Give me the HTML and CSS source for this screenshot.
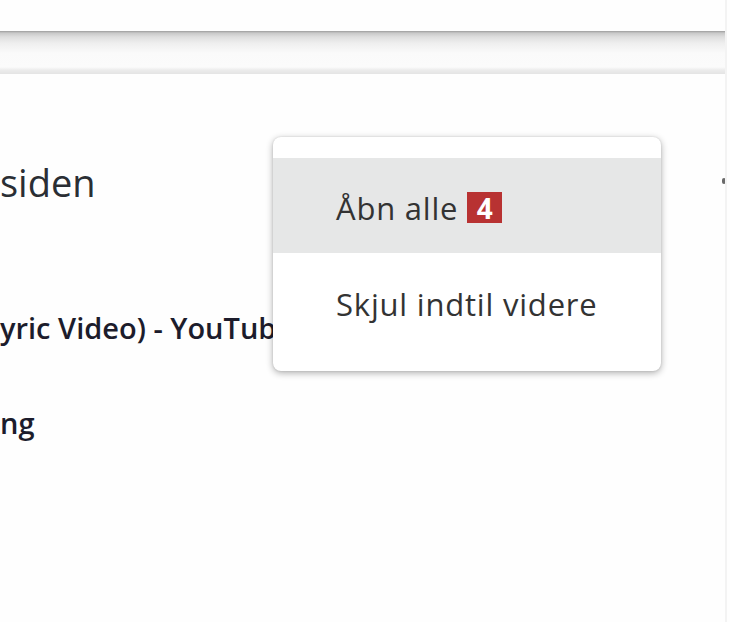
FILE: index.html
```html
<!DOCTYPE html>
<html lang="da">
<head>
<meta charset="utf-8">
<title>Menu</title>
<link rel="stylesheet" href="styles.css">
</head>
<body>
<div class="page">
  <div class="topbar"></div>
  <div class="content">
    <h2 class="heading">siden</h2>
    <ul class="list">
      <li class="item">yric Video) - YouTube</li>
      <li class="item">ng</li>
    </ul>
  </div>
  <div class="edge-mark"></div>
  <div class="menu">
    <div class="menu-item active">Åbn alle <span class="badge">4</span></div>
    <div class="menu-item second">Skjul indtil videre</div>
  </div>
</div>
</body>
</html>
```

FILE: styles.css
```css
html, body {
  margin: 0;
  padding: 0;
  background: #fefefe;
}
.page {
  position: relative;
  width: 727px;
  height: 622px;
  border-right: 2px solid #f3f3f3;
  overflow: hidden;
  font-family: "Open Sans", "Noto Sans", sans-serif;
  padding-top: 31px;
  box-sizing: border-box;
}
.topbar {
  height: 43px;
  background: linear-gradient(to bottom, #9c9c9c 0px, #c8c8c8 2px, #dedede 6px, #eeeeee 12px, #fafafa 22px, #fbfbfb 36px, #ececec 39px, #e4e4e4 43px);
}
.content {
  padding-top: 83px;
}
.heading {
  margin: 0;
  font-size: 38px;
  font-weight: 500;
  line-height: 50px;
  color: #2a2e34;
}
.list {
  list-style: none;
  margin: 0;
  padding: 0;
  padding-top: 101px;
}
.item {
  font-size: 29px;
  font-weight: 600;
  color: #1c1c2c;
  line-height: 40px;
  margin-bottom: 55px;
  white-space: nowrap;
}
.edge-mark {
  position: absolute;
  left: 722px;
  top: 178px;
  width: 4px;
  height: 6px;
  border-radius: 2px;
  background: #6a6a6a;
  filter: blur(0.6px);
}
.menu {
  position: absolute;
  left: 273px;
  top: 137px;
  width: 388px;
  background: #ffffff;
  border-radius: 8px;
  box-shadow: 0 2px 7px rgba(0, 0, 0, 0.32), 0 0 2px rgba(0, 0, 0, 0.12);
  padding: 21px 0 31px;
  overflow: hidden;
}
.menu-item {
  height: 95px;
  box-sizing: border-box;
  padding: 4px 0 0 63px;
  display: flex;
  align-items: center;
  gap: 9px;
  font-size: 31px;
  letter-spacing: 0.8px;
  color: #333333;
}
.menu-item.active {
  background: #e6e7e7;
}
.menu-item.second {
  height: 87px;
  padding-top: 14px;
}
.badge {
  display: inline-flex;
  align-items: center;
  justify-content: center;
  width: 35px;
  height: 31px;
  background: #b83232;
  color: #ffffff;
  font-weight: 700;
  font-size: 28px;
  letter-spacing: 0;
  line-height: 1;
}
```
